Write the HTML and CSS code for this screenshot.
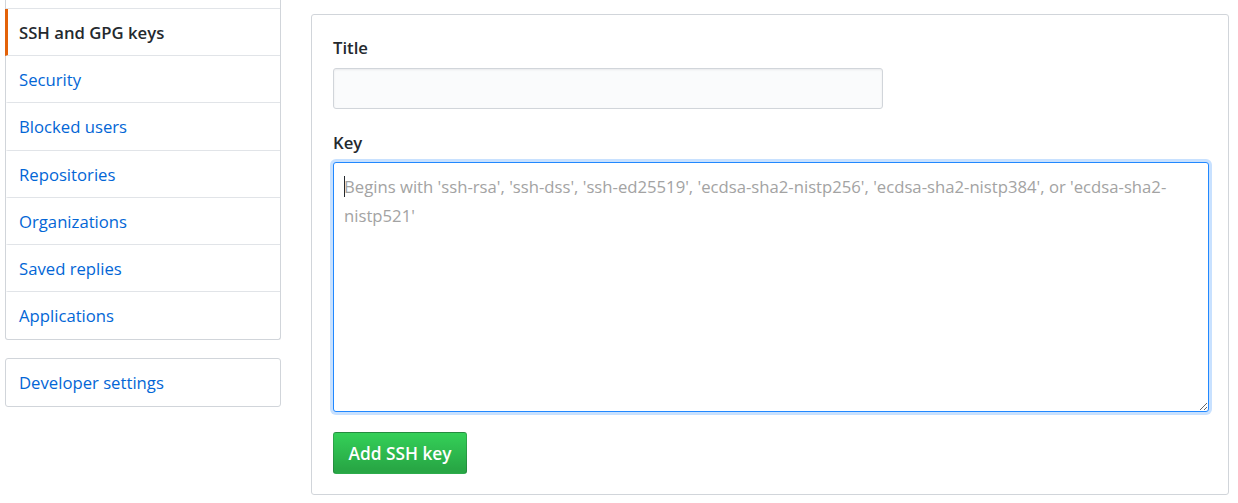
FILE: index.html
```html
<!DOCTYPE html>
<html>
<head>
<meta charset="utf-8">
<link rel="stylesheet" href="styles.css">
</head>
<body>
<div class="page">
  <aside class="sidebar">
    <nav class="menu">
      <div class="menu-top"></div>
      <a class="menu-item selected">SSH and GPG keys</a>
      <a class="menu-item">Security</a>
      <a class="menu-item tall">Blocked users</a>
      <a class="menu-item">Repositories</a>
      <a class="menu-item">Organizations</a>
      <a class="menu-item">Saved replies</a>
      <a class="menu-item">Applications</a>
    </nav>
    <nav class="menu dev">
      <a class="menu-item">Developer settings</a>
    </nav>
  </aside>
  <main class="main">
    <form class="box">
      <label class="label">Title</label>
      <input class="input" type="text">
      <label class="label key-label">Key</label>
      <div class="textarea-wrap">
        <textarea class="textarea" placeholder="Begins with 'ssh-rsa', 'ssh-dss', 'ssh-ed25519', 'ecdsa-sha2-nistp256', 'ecdsa-sha2-nistp384', or 'ecdsa-sha2-nistp521'"></textarea>
        <span class="caret"></span>
      </div>
      <button class="btn" type="button">Add SSH key</button>
    </form>
  </main>
</div>
</body>
</html>
```
FILE: styles.css
```css
* { box-sizing: border-box; }
html, body { margin: 0; padding: 0; background: #fff; }
body {
  font-family: "Open Sans", "Noto Sans", "Liberation Sans", sans-serif;
  font-size: 16.7px;
  color: #24292e;
  overflow: hidden;
}
.page {
  display: flex;
  align-items: flex-start;
  padding-left: 5px;
}
.sidebar {
  width: 276px;
  flex: none;
}
.menu {
  display: flex;
  flex-direction: column;
  border: 1px solid #d1d5da;
  border-radius: 3px;
  background: #fff;
}
.menu:first-child {
  border-top: none;
  border-radius: 0 0 3px 3px;
}
.menu-top {
  height: 9px;
  border-bottom: 1px solid #e1e4e8;
}
.menu-item {
  display: flex;
  align-items: center;
  height: 47px;
  padding-left: 11px;
  color: #0366d6;
  border-bottom: 1px solid #e1e4e8;
  text-decoration: none;
  border-left: 3px solid transparent;
  margin-left: -1px;
}
.menu-item.tall { height: 48px; }
.menu-item:last-child { border-bottom: none; }
.menu-item.selected {
  color: #24292e;
  font-weight: 600;
  border-left-color: #e36209;
}
.menu.dev { margin-top: 18px; }
.menu.dev .menu-item { height: 47px; }
.main {
  margin-left: 30px;
  margin-top: 14px;
  width: 918px;
  flex: none;
}
.box {
  display: flex;
  flex-direction: column;
  align-items: flex-start;
  border: 1px solid #d1d5da;
  border-radius: 3px;
  padding: 21px 20px 20px 21px;
}
.label {
  font-weight: 600;
  line-height: 23px;
  margin-bottom: 9px;
}
.key-label { margin-top: 22px; margin-bottom: 8px; }
.input {
  width: 550px;
  height: 41px;
  background: #fafbfc;
  border: 1px solid #d1d5da;
  border-radius: 3px;
  box-shadow: inset 0 1px 2px rgba(27,31,35,.075);
  font: inherit;
}
.textarea-wrap {
  position: relative;
  width: 876px;
  height: 250px;
}
.textarea {
  display: block;
  width: 100%;
  height: 100%;
  border: 1px solid #2188ff;
  border-radius: 3px;
  box-shadow: 0 0 0 3px #c8e1ff;
  outline: none;
  padding: 9px 10px;
  font: inherit;
  line-height: 29px;
  color: #24292e;
  resize: vertical;
}
.textarea::placeholder { color: #a3a3a3; }
.caret {
  position: absolute;
  left: 11px;
  top: 14px;
  width: 1px;
  height: 21px;
  background: #24292e;
}
.btn {
  margin-top: 20px;
  width: 134px;
  height: 42px;
  border: 1px solid rgba(27,31,35,.2);
  border-radius: 3px;
  background: linear-gradient(#34d058, #28a745 90%);
  color: #fff;
  font: inherit;
  font-weight: 600;
  font-size: 17.3px;
  padding: 0;
}
```
